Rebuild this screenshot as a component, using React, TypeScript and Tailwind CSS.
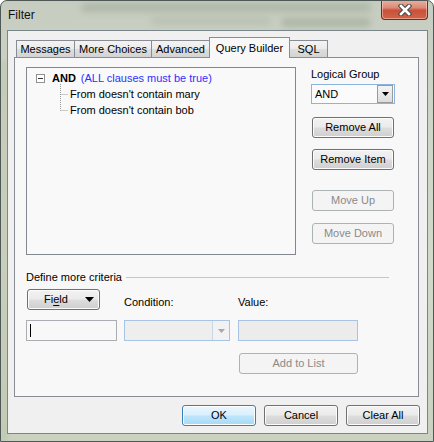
import React from "react"

type BtnProps = {
  children: React.ReactNode
  className?: string
  disabled?: boolean
  primary?: boolean
}

function Btn({ children, className = "", disabled, primary }: BtnProps) {
  let look =
    "border-[#707070] text-black bg-[linear-gradient(#f2f2f2,#ebebeb_48%,#dddddd_52%,#cfcfcf)] shadow-[inset_0_0_0_1px_#fcfcfc]"
  if (primary)
    look =
      "border-[#3c7fb1] text-black bg-[linear-gradient(#eaf6fd,#d9f0fc_48%,#bee6fd_52%,#a7d9f5)] shadow-[inset_0_0_0_1px_#ffffff]"
  if (disabled) look = "border-[#adb2b5] text-[#8a8a8a] bg-[#f4f4f4]"
  return (
    <div className={`flex h-[21px] items-center justify-center rounded-[3px] border ${look} ${className}`}>
      {children}
    </div>
  )
}

function Tab({ label, width, active }: { label: string; width: string; active?: boolean }) {
  if (active)
    return (
      <div
        className={`relative z-10 -mb-px -ml-px flex h-[21px] items-start justify-center border border-b-0 border-[#898c95] bg-[#f8f8f8] pt-[3px] ${width}`}
      >
        {label}
      </div>
    )
  return (
    <div
      className={`-ml-px flex h-[17px] items-center justify-center border border-b-0 border-[#898c95] bg-[linear-gradient(#f3f3f3,#ebebeb_50%,#dedede_50%,#d3d3d3)] pt-px ${width} first:ml-0`}
    >
      {label}
    </div>
  )
}

function CloseButton() {
  return (
    <div className="mr-[5px] -mt-px flex h-[20px] w-[47px] items-center justify-center rounded-b-[4px] border border-t-0 border-[#6e2c20] bg-[linear-gradient(#eab2a4,#dc8b77_40%,#c9513a_55%,#cf6447)] shadow-[inset_0_0_0_1px_rgba(255,220,210,0.5)]">
      <svg width="14" height="12" viewBox="0 0 14 12">
        <path d="M3 2 L11 10 M11 2 L3 10" stroke="#4a4a4a" strokeWidth="4.6" strokeLinecap="square" />
        <path d="M3 2 L11 10 M11 2 L3 10" stroke="#ffffff" strokeWidth="2.6" strokeLinecap="square" />
      </svg>
    </div>
  )
}

function DownTri({ color = "#000", w = 7 }: { color?: string; w?: number }) {
  return (
    <svg width={w} height={Math.ceil(w / 2)} viewBox={`0 0 ${w} ${Math.ceil(w / 2)}`}>
      <path d={`M0 0 H${w} L${w / 2} ${Math.ceil(w / 2)} Z`} fill={color} />
    </svg>
  )
}

export default function App() {
  return (
    <div className="relative h-[442px] w-[434px] overflow-hidden rounded-t-[7px] border border-[#4f5854] bg-[linear-gradient(180deg,#c6cdc0,#d0d6c7_30%,#d3d9c9_60%,#cad1c0)] font-['Liberation_Sans',Arial,sans-serif] text-[11px] leading-[15px] text-black">
      {/* blurred glass behind the title bar */}
      <div className="pointer-events-none absolute left-[80px] top-[2px] h-[9px] w-[290px] rounded-full bg-[#9aa491] opacity-50 blur-[3px]" />
      <div className="pointer-events-none absolute left-[150px] top-[16px] h-[8px] w-[120px] rounded-full bg-[#a3ad9b] opacity-40 blur-[3px]" />
      <div className="pointer-events-none absolute left-[280px] top-[17px] h-[9px] w-[90px] rounded-full bg-[#949f8b] opacity-50 blur-[3px]" />
      <div className="pointer-events-none absolute left-[0px] top-[60px] h-[380px] w-[6px] bg-[#b9c3a8] opacity-60 blur-[2px]" />

      <div className="relative flex h-[29px] items-start">
        <span className="ml-[7px] mt-[7px] text-[12px] text-[#111]">Filter</span>
        <div className="ml-auto">
          <CloseButton />
        </div>
      </div>

      <div className="relative ml-[6px] h-[404px] w-[421px] border border-[#7b858c] bg-[#f0f0f0] pl-[6px] pt-[6px]">
        {/* tabs */}
        <div className="flex h-[20px] items-end pl-[2px]">
          <Tab label="Messages" width="w-[59px]" />
          <Tab label="More Choices" width="w-[78px]" />
          <Tab label="Advanced" width="w-[59px]" />
          <Tab label="Query Builder" width="w-[81px]" active />
          <Tab label="SQL" width="w-[39px]" />
        </div>

        {/* tab page */}
        <div className="h-[340px] w-[405px] border border-[#898c95] bg-[#f8f8f8] pl-[11px] pt-[9px]">
          <div className="flex">
            {/* tree */}
            <div className="relative h-[188px] w-[270px] border border-[#828790] bg-[#f9f9f9] pt-[2px]">
              <svg className="absolute left-[33px] top-[16px]" width="9" height="28" viewBox="0 0 9 28">
                <path d="M0.5 0 V26.5 M0.5 10.5 H8 M0.5 26.5 H8" stroke="#9a9a9a" strokeDasharray="1 1" fill="none" />
              </svg>
              <div className="flex h-[16px] items-center pl-[9px]">
                <div className="flex h-[9px] w-[9px] items-center justify-center border border-[#919191] bg-white">
                  <div className="h-px w-[5px] bg-[#333]" />
                </div>
                <span className="ml-[7px] font-bold">AND</span>
                <span className="ml-[5px] text-[#2f2fff]">(ALL clauses must be true)</span>
              </div>
              <div className="flex h-[16px] items-center pl-[43px]">From doesn't contain mary</div>
              <div className="flex h-[16px] items-center pl-[43px]">From doesn't contain bob</div>
            </div>

            {/* right column */}
            <div className="ml-[15px] flex w-[84px] flex-col">
              <div className="h-[15px]">Logical Group</div>
              <div className="mt-[2px] flex h-[20px] items-center border border-[#8cb4df] bg-[#fbfbfb] pl-[3px]">
                <span>AND</span>
                <div className="ml-auto mr-[1px] flex h-[18px] w-[16px] items-center justify-center border border-[#9a9a9a] bg-[linear-gradient(#f4f4f4,#dcdcdc)]">
                  <DownTri />
                </div>
              </div>
              <Btn className="ml-px mt-[13px] w-[82px]">Remove All</Btn>
              <Btn className="ml-px mt-[11px] w-[82px]">Remove Item</Btn>
              <Btn className="ml-px mt-[20px] w-[82px]" disabled>
                Move Up
              </Btn>
              <Btn className="ml-px mt-[12px] w-[82px]" disabled>
                Move Down
              </Btn>
            </div>
          </div>

          {/* define more criteria */}
          <div className="mt-[15px] flex h-[15px] w-[363px] items-center">
            <span>Define more criteria</span>
            <div className="ml-[4px] h-px flex-1 bg-[#c6c6c6]" />
          </div>

          <div className="grid grid-cols-[91px_106px_121px] gap-x-[7px]">
            <div className="mt-[4px]">
              <Btn className="ml-px h-[20px] w-[73px]">
                <div className="flex w-full items-center pl-[16px] pr-[5px]">
                  <span>
                    Fi<span className="underline underline-offset-2">e</span>ld
                  </span>
                  <span className="ml-auto flex">
                    <DownTri w={9} />
                  </span>
                </div>
              </Btn>
            </div>
            <div className="mt-[10px]">Condition:</div>
            <div className="ml-px mt-[10px]">Value:</div>

            <div className="mt-[10px] flex h-[21px] items-center border border-[#abadb3] bg-[#f8f8f8] pl-[3px]">
              <div className="h-[13px] w-px bg-black" />
            </div>
            <div className="mt-[10px] flex h-[21px] items-center border border-[#a9c3e2] bg-[#eeeeee]">
              <div className="ml-auto flex h-full w-[17px] items-center justify-center border-l border-[#c9d6e3] bg-[#f2f2f2]">
                <DownTri color="#a8a8a8" w={7} />
              </div>
            </div>
            <div className="ml-px mt-[10px] h-[21px] border border-[#a9c3e2] bg-[#ececec]" />

            <div />
            <div />
            <Btn className="ml-[2px] mt-[12px] w-[119px]" disabled>
              Add to List
            </Btn>
          </div>
        </div>

        {/* dialog buttons */}
        <div className="mt-[8px] flex w-[406px] justify-end gap-[8px]">
          <Btn className="w-[74px]" primary>
            OK
          </Btn>
          <Btn className="w-[74px]">Cancel</Btn>
          <Btn className="w-[74px]">Clear All</Btn>
        </div>
      </div>
    </div>
  )
}
